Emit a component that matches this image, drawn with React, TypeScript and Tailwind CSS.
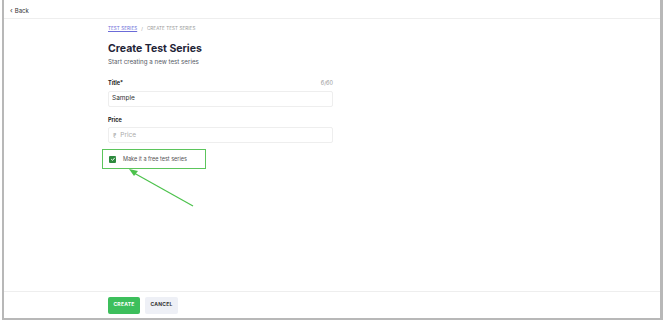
import React from "react";

export default function App() {
  return (
    <div className="w-[670px] h-[322px] bg-white relative overflow-hidden" style={{ fontFamily: "Inter, 'Noto Sans', sans-serif" }}>
      <div className="absolute left-[2px] top-0 w-[661px] h-[320px] border-l-[2px] border-r-[3px] border-b-[2px] border-[#b8b8b8] bg-white flex flex-col">
        <div className="h-[19px] border-b border-[#eeeeee] flex items-center pl-[6px] pt-[2px] text-[6px] text-[#333] gap-[2px]">
          <span className="text-[7px] leading-none">‹</span>
          <span>Back</span>
        </div>
        <div className="flex-1 pl-[104px] pt-[7px]">
          <div className="flex items-center gap-[4px] text-[4.5px] tracking-wide">
            <span className="text-[#6b6bd8] underline">TEST SERIES</span>
            <span className="text-[#999]">/</span>
            <span className="text-[#999]">CREATE TEST SERIES</span>
          </div>
          <div className="mt-[11px] text-[10.5px] font-bold text-[#1f2437] leading-none">Create Test Series</div>
          <div className="mt-[5px] text-[6.2px] text-[#555a66] leading-none">Start creating a new test series</div>
          <div className="w-[225px] mt-[16px]">
            <div className="flex justify-between items-center text-[5.5px] leading-none">
              <span className="font-bold text-[#222]">Title*</span>
              <span className="text-[#999]">6/60</span>
            </div>
            <div className="mt-[4px] h-[16px] border border-[#eeeeee] rounded-[2px] flex items-center px-[3px] text-[6.5px] text-[#333]">Sample</div>
            <div className="mt-[11px] text-[5.5px] font-bold text-[#222] leading-none">Price</div>
            <div className="mt-[4px] h-[16px] border border-[#eeeeee] rounded-[2px] flex items-center px-[4px] gap-[4px] text-[6.5px] text-[#aaa]">
              <span className="text-[6px]">₹</span>
              <span>Price</span>
            </div>
          </div>
          <div className="relative mt-[6px] -ml-[6px] w-[104px] h-[20px] border-[1.5px] border-[#5cc55c] flex items-center pl-[6px] gap-[7px]">
            <div className="w-[7px] h-[7px] bg-[#2e8b3e] rounded-[1px] flex items-center justify-center">
              <svg width="6" height="6" viewBox="0 0 10 10"><path d="M2 5.2 L4.2 7.3 L8 3" stroke="white" strokeWidth="1.6" fill="none" /></svg>
            </div>
            <span className="text-[5.5px] text-[#555]">Make it a free test series</span>
          </div>
        </div>
        <div className="h-[27px] border-t border-[#eeeeee] flex items-center pl-[104px] gap-[5px]">
          <div className="h-[17px] w-[32px] bg-[#3dbf5c] rounded-[2px] flex items-center justify-center text-[5px] font-bold text-white tracking-wider">CREATE</div>
          <div className="h-[17px] w-[33px] bg-[#eef0f6] rounded-[2px] flex items-center justify-center text-[5px] font-bold text-[#333] tracking-wider">CANCEL</div>
        </div>
      </div>
      <svg className="absolute left-0 top-0" width="670" height="322" viewBox="0 0 670 322">
        <line x1="193" y1="206" x2="134" y2="173" stroke="#4cc24c" strokeWidth="1.2" />
        <polygon points="129,169 138,171 134,176" fill="#4cc24c" />
      </svg>
    </div>
  );
}
